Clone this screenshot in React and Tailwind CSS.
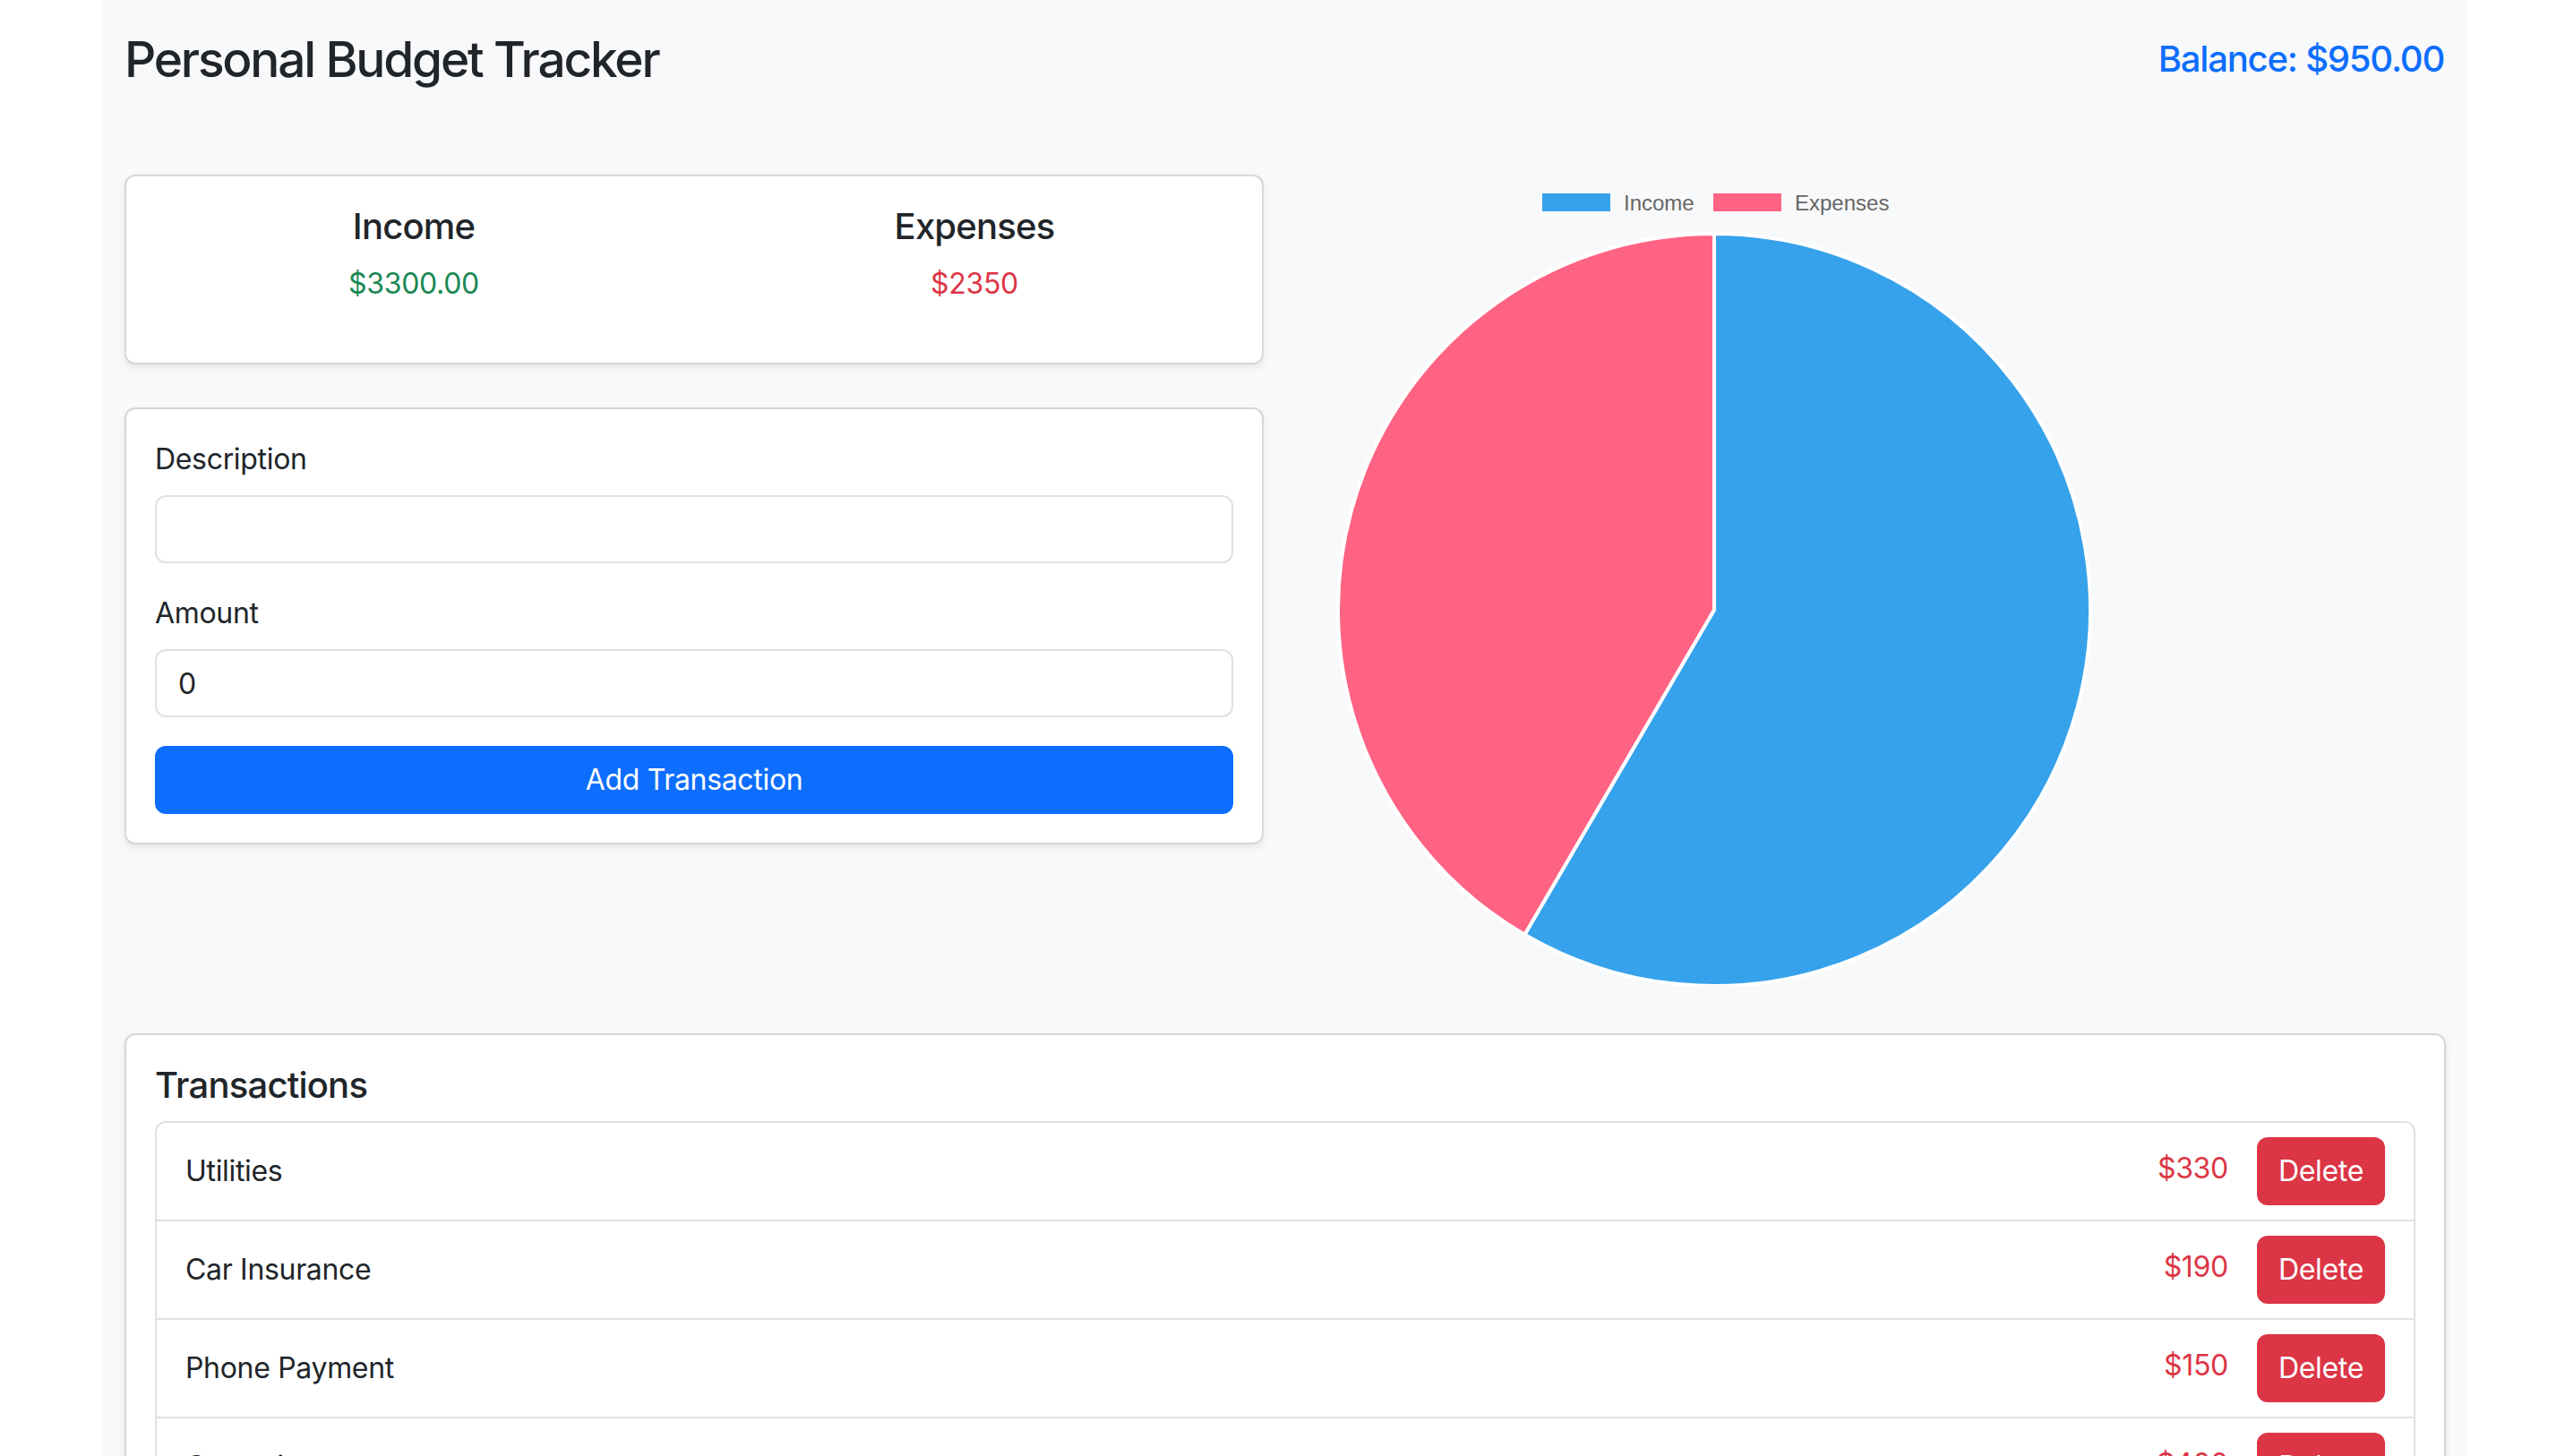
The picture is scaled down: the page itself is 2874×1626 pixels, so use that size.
import React from "react"

const transactions = [
  { id: 1, description: "Utilities", amount: 330 },
  { id: 2, description: "Car Insurance", amount: 190 },
  { id: 3, description: "Phone Payment", amount: 150 },
  { id: 4, description: "Groceries", amount: 400 },
]

const income = 3300
const expenses = 2350

// pie geometry, canvas is 906x906 like the chart.js one
const cx = 453
const cy = 486
const r = 420

const PieChart = () => {
  const frac = income / (income + expenses)
  const end = -Math.PI / 2 + frac * Math.PI * 2
  const ex = cx + r * Math.cos(end)
  const ey = cy + r * Math.sin(end)
  const big = frac > 0.5 ? 1 : 0

  return (
    <svg width="906" height="906" viewBox="0 0 906 906">
      {/* Legend */}
      <rect x="261" y="21" width="76" height="20" fill="#36A2EB" />
      <text x="352" y="40" fontSize="24" fill="#666666" fontFamily="'Liberation Sans', Arial, sans-serif">
        Income
      </text>
      <rect x="452" y="21" width="76" height="20" fill="#FF6384" />
      <text x="543" y="40" fontSize="24" fill="#666666" fontFamily="'Liberation Sans', Arial, sans-serif">
        Expenses
      </text>

      {/* Slices */}
      <path
        d={`M${cx},${cy} L${cx},${cy - r} A${r},${r} 0 ${big} 1 ${ex},${ey} Z`}
        fill="#36A2EB"
        stroke="#ffffff"
        strokeWidth="4"
        strokeLinejoin="round"
      />
      <path
        d={`M${cx},${cy} L${ex},${ey} A${r},${r} 0 ${1 - big} 1 ${cx},${cy - r} Z`}
        fill="#FF6384"
        stroke="#ffffff"
        strokeWidth="4"
        strokeLinejoin="round"
      />
    </svg>
  )
}

const App = () => {
  return (
    <div className="min-h-screen bg-white font-['Inter','Noto_Sans',sans-serif] text-[#212529]">
      <div className="ml-[115px] w-[2640px] min-h-screen bg-[#f8f9fa] px-[24px] pt-[33px]">
        {/* Header */}
        <div className="flex items-center justify-between mb-[96px]">
          <h1 className="text-[55px] leading-[1.2] font-medium tracking-[-0.04em]">Personal Budget Tracker</h1>
          <h3 className="text-[40px] leading-[1.2] font-medium text-[#0d6efd] tracking-[-0.03em] mr-[2px]">Balance: $950.00</h3>
        </div>

        <div className="flex gap-[48px]">
          {/* Left column */}
          <div className="w-[1272px]">
            {/* Summary */}
            <div className="bg-white border-2 border-[#d6d7d8] rounded-[12px] shadow-[0_4px_8px_rgba(0,0,0,0.075)] p-[32px] mb-[48px]">
              <div className="grid grid-cols-2 gap-[48px] text-center">
                <div>
                  <h5 className="text-[40px] leading-[1.2] font-medium mb-[16px] tracking-[-0.02em]">Income</h5>
                  <p className="text-[32px] leading-[1.5] text-[#198754] mb-[32px] tracking-[-0.01em]">${income.toFixed(2)}</p>
                </div>
                <div>
                  <h5 className="text-[40px] leading-[1.2] font-medium mb-[16px] tracking-[-0.02em]">Expenses</h5>
                  <p className="text-[32px] leading-[1.5] text-[#dc3545] mb-[32px] tracking-[-0.01em]">${expenses}</p>
                </div>
              </div>
            </div>

            {/* Form */}
            <div className="bg-white border-2 border-[#d6d7d8] rounded-[12px] shadow-[0_4px_8px_rgba(0,0,0,0.075)] p-[32px]">
              <form>
                <div className="mb-[32px]">
                  <label className="block text-[32px] leading-[1.5] mb-[16px] tracking-[-0.01em]">Description</label>
                  <input
                    type="text"
                    defaultValue=""
                    className="block w-full h-[76px] border-2 border-[#dee2e6] rounded-[12px] px-[24px] text-[32px] bg-white outline-none"
                  />
                </div>
                <div className="mb-[32px]">
                  <label className="block text-[32px] leading-[1.5] mb-[16px] tracking-[-0.01em]">Amount</label>
                  <input
                    type="text"
                    defaultValue="0"
                    className="block w-full h-[76px] border-2 border-[#dee2e6] rounded-[12px] px-[24px] text-[32px] text-[#212529] bg-white outline-none"
                  />
                </div>
                <button
                  type="button"
                  className="w-full h-[76px] bg-[#0d6efd] text-white text-[32px] tracking-[-0.01em] rounded-[12px] border-2 border-[#0d6efd]"
                >
                  Add Transaction
                </button>
              </form>
            </div>
          </div>

          {/* Chart column */}
          <div className="w-[1272px] pl-[2px]">
            <PieChart />
          </div>
        </div>

        {/* Transactions */}
        <div className="mt-[53px] bg-white border-2 border-[#d6d7d8] rounded-[12px] shadow-[0_4px_8px_rgba(0,0,0,0.075)] p-[32px]">
          <h5 className="text-[40px] leading-[1.2] font-medium mb-[16px] tracking-[-0.02em]">Transactions</h5>
          <ul className="border-2 border-[#dee2e6] rounded-[12px]">
            {transactions.map((t, i) => (
              <li
                key={t.id}
                className={`flex items-center justify-between px-[32px] py-[16px] ${
                  i > 0 ? "border-t-2 border-[#dee2e6]" : ""
                }`}
              >
                <span className="text-[32px] leading-[1.5] tracking-[-0.01em]">{t.description}</span>
                <div className="flex items-center">
                  <span className="text-[32px] leading-[1.5] text-[#dc3545] mr-[32px] mb-[6px] tracking-[-0.01em]">${t.amount}</span>
                  <button
                    type="button"
                    className="h-[76px] px-[24px] bg-[#dc3545] text-white text-[32px] tracking-[-0.01em] rounded-[12px]"
                  >
                    Delete
                  </button>
                </div>
              </li>
            ))}
          </ul>
        </div>
      </div>
    </div>
  )
}

export default App
